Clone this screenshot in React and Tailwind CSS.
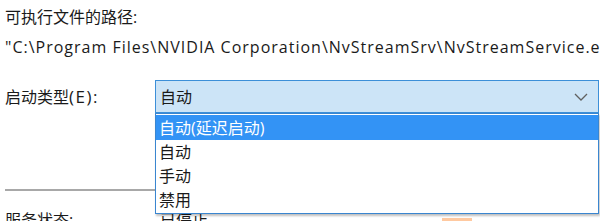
import React from "react";

export default function App() {
  const font = { fontFamily: '"Open Sans", "Noto Sans CJK SC", sans-serif' };
  return (
    <div className="relative w-[600px] h-[221px] overflow-hidden bg-white text-[#1a1a1a]" style={font}>
      <div className="pl-[5px] pt-[5px] text-[16px] leading-[24px]">可执行文件的路径:</div>
      <div className="pl-[5px] pt-[6px] text-[16px] leading-[24px] whitespace-nowrap tracking-[1px]">
        "C:\Program Files\NVIDIA Corporation\NvStreamSrv\NvStreamService.exe"
      </div>
      <div className="flex items-center mt-[21px]">
        <div className="w-[155px] pl-[5px] text-[16px]">
          启动类型<span className="text-[17px] tracking-[1.5px]">(E):</span>
        </div>
        <div className="flex items-center justify-between w-[444px] h-[33px] bg-[#cce4f7] border border-[#3c8fd8] pl-[4px] pr-[10px] text-[16px]">
          <span>自动</span>
          <svg width="14" height="8" viewBox="0 0 14 8" fill="none">
            <path d="M1 1l6 6 6-6" stroke="#606060" strokeWidth="1.3" />
          </svg>
        </div>
      </div>
      <div className="mt-[76px] ml-[5px] w-[160px] h-[2px] bg-[#a8a8a8]"></div>
      <div className="flex items-center mt-[17px] text-[16px] leading-[24px]">
        <div className="w-[160px] pl-[5px]">服务状态:</div>
        <div>已停止</div>
      </div>
      <div className="absolute left-[442px] top-[218px] w-[30px] h-[3px] bg-[#ffc9a0]"></div>
      <div className="absolute left-[155px] top-[113px] w-[444px] h-[101px] bg-white border border-[#3a86d0] shadow-[1px_2px_2px_rgba(0,0,0,0.25)] text-[16px] flex flex-col">
        <div className="h-[25px] mt-[1px] bg-[#3393f5] text-white pl-[3px] flex items-center">自动(延迟启动)</div>
        <div className="h-[24px] pl-[3px] flex items-center">自动</div>
        <div className="h-[24px] pl-[3px] flex items-center">手动</div>
        <div className="h-[24px] pl-[3px] flex items-center">禁用</div>
      </div>
    </div>
  );
}
